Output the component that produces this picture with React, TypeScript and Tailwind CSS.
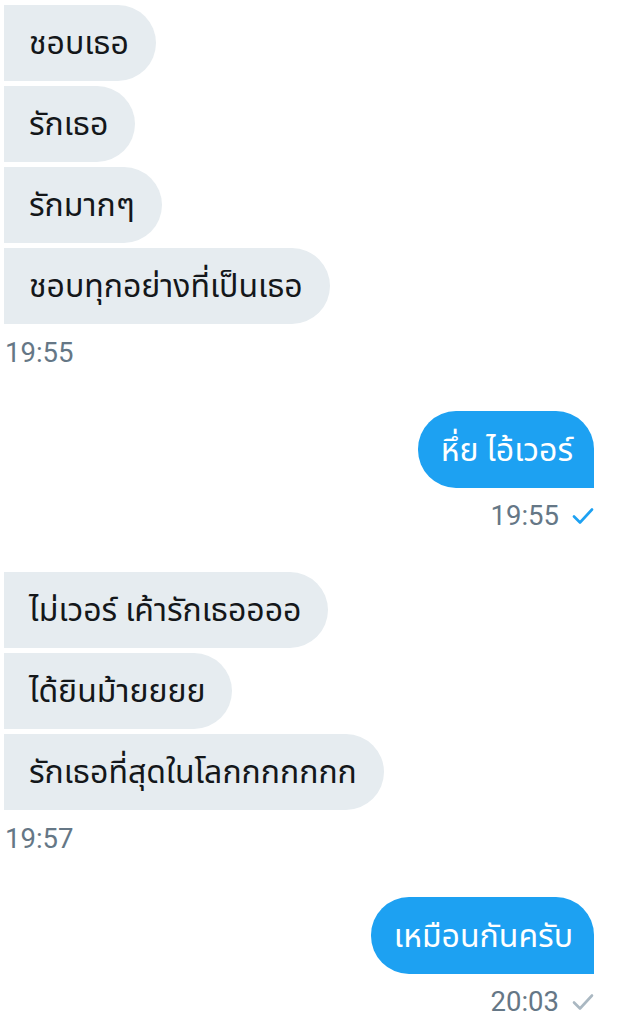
const groups = [
  { side: "in", msgs: ["ชอบเธอ", "รักเธอ", "รักมากๆ", "ชอบทุกอย่างที่เป็นเธอ"], time: "19:55" },
  { side: "out", msgs: ["หึ่ย ไอ้เวอร์"], time: "19:55", read: true },
  { side: "in", msgs: ["ไม่เวอร์ เค้ารักเธออออ", "ได้ยินม้ายยยย", "รักเธอที่สุดในโลกกกกกกก"], time: "19:57" },
  { side: "out", msgs: ["เหมือนกันครับ"], time: "20:03", read: false },
];

function Check({ color }: { color: string }) {
  return (
    <svg width="22" height="18" viewBox="0 0 22 18" fill="none" className="ml-[13px]">
      <path d="M2 9.5 L8 15.5 L20 2.5" stroke={color} strokeWidth="2.6" strokeLinecap="round" strokeLinejoin="round" />
    </svg>
  );
}

export default function App() {
  return (
    <div className="w-[618px] h-[1025px] bg-white overflow-hidden pt-[5px] font-['Roboto','Noto_Sans','Noto_Sans_Thai',sans-serif]">
      {groups.map((g, gi) =>
        g.side === "in" ? (
          <div key={gi} className={gi === 0 ? "" : "mt-[41px]"}>
            <div className="flex flex-col items-start gap-[5px] pl-[4px]">
              {g.msgs.map((m, i) => (
                <div
                  key={i}
                  className="h-[76px] flex items-center pl-[25px] pr-[27px] bg-[#e6ecf0] rounded-r-[38px] text-[32px] text-[#14171a]"
                >
                  {m}
                </div>
              ))}
            </div>
            <div className="mt-[14px] pl-[5px] h-[30px] leading-[30px] text-[27.5px] text-[#657786]">{g.time}</div>
          </div>
        ) : (
          <div key={gi} className="mt-[43px] pr-[24px]">
            <div className="flex flex-col items-end gap-[5px]">
              {g.msgs.map((m, i) => (
                <div
                  key={i}
                  className="h-[77px] flex items-center pl-[23px] pr-[21px] bg-[#1da1f2] rounded-l-[38px] rounded-tr-[38px] text-[32px] text-white"
                >
                  {m}
                </div>
              ))}
            </div>
            <div className="mt-[13px] flex items-center justify-end h-[30px] text-[27.5px] text-[#657786]">
              <span className="leading-[30px]">{g.time}</span>
              <Check color={g.read ? "#1da1f2" : "#aab8c2"} />
            </div>
          </div>
        )
      )}
    </div>
  );
}
